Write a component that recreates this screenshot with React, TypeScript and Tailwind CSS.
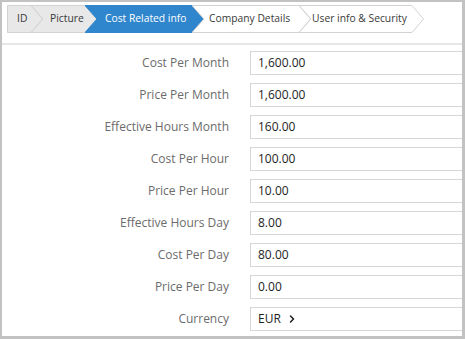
import { ChevronRight } from 'lucide-react';

type Step = {
  label: string;
  width: string;
  w: number;
  pad: string;
  fill: string;
  stroke: string;
  text: string;
  first?: boolean;
};

const steps: Step[] = [
  { label: 'ID', width: 'w-[36px]', w: 36, pad: 'pl-[10px]', fill: '#e8e8e8', stroke: '#d2d2d2', text: 'text-[#3a3a3a]', first: true },
  { label: 'Picture', width: 'w-[66px]', w: 66, pad: 'pl-[19px]', fill: '#e8e8e8', stroke: '#d2d2d2', text: 'text-[#3a3a3a]' },
  { label: 'Cost Related info', width: 'w-[119px]', w: 119, pad: 'pl-[20px]', fill: '#2f86cd', stroke: '#2f86cd', text: 'text-white' },
  { label: 'Company Details', width: 'w-[119px]', w: 119, pad: 'pl-[17px]', fill: '#ffffff', stroke: '#d2d2d2', text: 'text-[#3a3a3a]' },
  { label: 'User info & Security', width: 'w-[125px]', w: 125, pad: 'pl-[13px]', fill: '#ffffff', stroke: '#d2d2d2', text: 'text-[#3a3a3a]' },
];

const fields = [
  { label: 'Cost Per Month', value: '1,600.00' },
  { label: 'Price Per Month', value: '1,600.00' },
  { label: 'Effective Hours Month', value: '160.00' },
  { label: 'Cost Per Hour', value: '100.00' },
  { label: 'Price Per Hour', value: '10.00' },
  { label: 'Effective Hours Day', value: '8.00' },
  { label: 'Cost Per Day', value: '80.00' },
  { label: 'Price Per Day', value: '0.00' },
];

const StepItem = ({ step }: { step: Step }) => {
  const w = step.w;
  // chevron shape; first one has no notch
  const pts = step.first
    ? `0.5,0.5 ${w - 12},0.5 ${w - 0.5},14 ${w - 12},27.5 0.5,27.5`
    : `0,0.5 ${w - 12},0.5 ${w - 0.5},14 ${w - 12},27.5 0,27.5 12,14`;
  return (
    <div className={`relative h-[28px] shrink-0 flex items-center ${step.width} ${step.first ? '' : 'ml-[-12px]'}`}>
      <svg className="absolute inset-0" width={w} height={28}>
        <polygon points={pts} fill={step.fill} stroke={step.stroke} strokeWidth={1} />
      </svg>
      <span className={`relative whitespace-nowrap text-[10.3px] ${step.pad} ${step.text}`}>{step.label}</span>
    </div>
  );
};

const App = () => {
  return (
    <div
      className="w-[465px] h-[339px] overflow-hidden bg-white border-t-2 border-l-2 border-r-[3px] border-b-[3px] border-[#c2c2c2]"
      style={{ fontFamily: '"Open Sans", "Liberation Sans", sans-serif' }}
    >
      <div className="flex flex-row pt-[3px] pl-[5px]">
        {steps.map((s) => (
          <StepItem key={s.label} step={s} />
        ))}
      </div>
      <div className="mt-[10px] h-[2px] bg-[#e6e6e6]" />
      <div className="flex flex-col gap-2 pt-[6px]">
        {fields.map((f) => (
          <div key={f.label} className="flex flex-row items-center gap-[21px]">
            <label className="w-[227px] shrink-0 text-right text-[12px] text-[#6b6b6b]">{f.label}</label>
            <div className="w-[240px] shrink-0 h-6 border border-[#d6d6d6] flex items-center pl-[7px] text-[12px] text-[#1e1e1e]">
              {f.value}
            </div>
          </div>
        ))}
        <div className="flex flex-row items-center gap-[21px]">
          <label className="w-[227px] shrink-0 text-right text-[12px] text-[#6b6b6b]">Currency</label>
          <div className="w-[240px] shrink-0 h-6 border border-[#d6d6d6] flex items-center gap-[5px] pl-[7px] text-[12px] text-[#1e1e1e]">
            EUR
            <ChevronRight size={12} strokeWidth={3} />
          </div>
        </div>
      </div>
    </div>
  );
};

export default App;
